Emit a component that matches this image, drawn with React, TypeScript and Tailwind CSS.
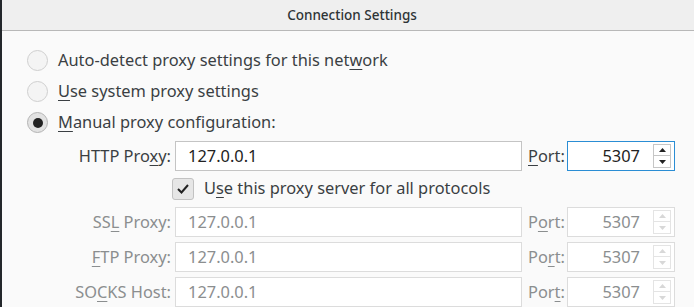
import type { ReactNode } from "react";

const font = { fontFamily: '"Noto Sans", "Open Sans", sans-serif' };

function U({ children }: { children: ReactNode }) {
    return <span className="underline decoration-1 underline-offset-[3px]">{children}</span>;
}

function Radio({ checked, children }: { checked?: boolean; children: ReactNode }) {
    return (
        <div className="flex items-center h-[31px]">
            <div
                className={`w-[21px] h-[21px] rounded-full border flex items-center justify-center ${
                    checked ? "border-[#b4b4b4] bg-[#e2e2e2]" : "border-[#cfcfcf] bg-[#f4f4f4]"
                }`}
            >
                {checked && <div className="w-[10px] h-[10px] rounded-full bg-[#222]" />}
            </div>
            <span className="ml-[10px] text-[16.4px] text-[#3a3f43]">{children}</span>
        </div>
    );
}

function Spinner({ disabled }: { disabled?: boolean }) {
    const c = disabled ? "#d8d8d8" : "#222";
    const b = disabled ? "border-[#e4e4e4]" : "border-[#c6c6c6]";
    return (
        <div className="flex flex-col mr-[3px]">
            <div className={`w-[18px] h-[12px] border ${b} flex items-center justify-center`}>
                <svg width="7" height="4" viewBox="0 0 7 4">
                    <path d="M0 4 L3.5 0 L7 4 Z" fill={c} />
                </svg>
            </div>
            <div className={`w-[18px] h-[12px] border border-t-0 ${b} flex items-center justify-center`}>
                <svg width="7" height="4" viewBox="0 0 7 4">
                    <path d="M0 0 L3.5 4 L7 0 Z" fill={c} />
                </svg>
            </div>
        </div>
    );
}

function ProxyRow({
    label,
    port,
    disabled,
    focused,
}: {
    label: ReactNode;
    port: ReactNode;
    disabled?: boolean;
    focused?: boolean;
}) {
    const txt = disabled ? "text-[#8b8e8f]" : "text-[#3a3f43]";
    const val = disabled ? "text-[#8b8e8f]" : "text-[#222]";
    const border = disabled ? "border-[#dcdcdc]" : "border-[#c4c4c4]";
    return (
        <div className="flex items-center h-[30px]">
            <div className={`w-[173px] text-right text-[16.4px] pr-[4px] ${txt}`}>{label}</div>
            <div className={`w-[347px] h-[30px] border ${border} bg-white flex items-center pl-[12px] text-[16.4px] ${val}`}>
                127.0.0.1
            </div>
            <div className={`w-[45px] pl-[6px] text-[16.4px] ${txt}`}>{port}</div>
            <div
                className={`w-[108px] h-[30px] border bg-white flex items-center ${
                    focused ? "border-[#2a8dd4]" : border
                }`}
            >
                <span className={`ml-auto mr-[13px] text-[16.4px] ${val}`}>5307</span>
                <Spinner disabled={disabled} />
            </div>
        </div>
    );
}

export default function App() {
    return (
        <div style={font} className="w-[694px] h-[307px] overflow-hidden bg-[#fafafa] border-l-2 border-[#23272b]">
            {/* TITLE */}
            <div className="h-[31px] bg-[#efefef] border-b border-[#b8b8b8] flex items-center justify-center">
                <span className="text-[13.5px] font-medium text-[#2e3436] ml-[8px]">Connection Settings</span>
            </div>

            {/* OPTIONS */}
            <div className="pl-[25px] pt-[14px]">
                <Radio>
                    Auto-detect proxy settings for this net<U>w</U>ork
                </Radio>
                <Radio>
                    <U>U</U>se system proxy settings
                </Radio>
                <Radio checked>
                    <U>M</U>anual proxy configuration:
                </Radio>
            </div>

            <div className="mt-[3px] flex flex-col">
                <ProxyRow label={<>HTTP Pro<U>x</U>y:</>} port={<><U>P</U>ort:</>} focused />

                <div className="flex items-center h-[35px] pl-[170px]">
                    <div className="w-[22px] h-[22px] rounded-[3px] border border-[#c2c2c2] bg-[#e6e6e6] flex items-center justify-center">
                        <svg width="14" height="12" viewBox="0 0 14 12">
                            <path d="M2 6 L5.5 9.5 L12 2" stroke="#222" strokeWidth="2" fill="none" />
                        </svg>
                    </div>
                    <span className="ml-[10px] text-[16.4px] text-[#3a3f43]">
                        U<U>s</U>e this proxy server for all protocols
                    </span>
                </div>

                <div className="flex flex-col gap-[5px] mt-[1px]">
                    <ProxyRow label={<>SS<U>L</U> Proxy:</>} port={<>P<U>o</U>rt:</>} disabled />
                    <ProxyRow label={<><U>F</U>TP Proxy:</>} port={<>Po<U>r</U>t:</>} disabled />
                    <ProxyRow label={<>SO<U>C</U>KS Host:</>} port={<>Por<U>t</U>:</>} disabled />
                </div>
            </div>
        </div>
    );
}
